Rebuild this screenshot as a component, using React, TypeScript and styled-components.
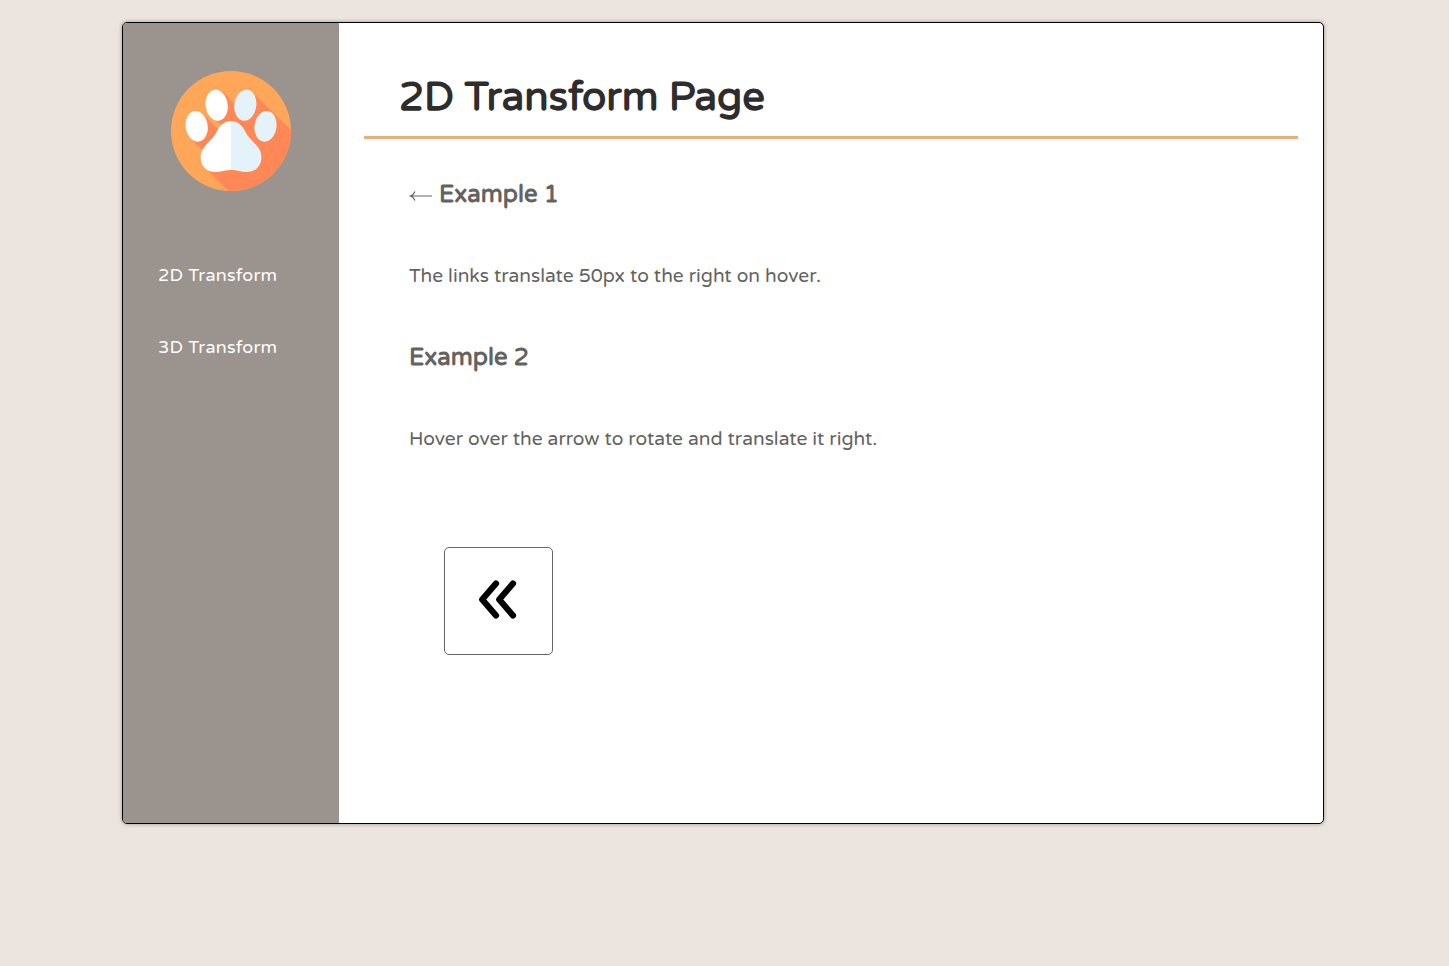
import React from "react";
import styled, { createGlobalStyle } from "styled-components";

const GlobalStyle = createGlobalStyle`
  * { box-sizing: border-box; }
  body {
    margin: 0;
    min-height: 100vh;
    background: #ece4df;
    font-family: "Varela Round", "Noto Sans", sans-serif;
    color: #636361;
  }
`;

const Frame = styled.div`
  display: flex;
  width: 1202px;
  height: 802px;
  margin: 22px 0 0 122px;
  border: 1px solid #000;
  border-radius: 5px;
  background: #fff;
  overflow: hidden;
  box-shadow: 0 0 4px rgba(0, 0, 0, 0.35);
`;

const Sidebar = styled.aside`
  flex: 0 0 216px;
  padding-top: 48px;
  background: #9b938d;
`;

const Logo = styled.svg`
  display: block;
  width: 120px;
  height: 120px;
  margin: 0 auto;
`;

const Nav = styled.nav`
  display: flex;
  flex-direction: column;
  gap: 48px;
  padding: 72px 0 0 35px;
`;

const NavLink = styled.a`
  font-size: 18px;
  line-height: 24px;
  letter-spacing: 0.22px;
  color: #fff;
  text-decoration: none;
  white-space: nowrap;
`;

const Main = styled.main`
  flex: 1;
  padding: 44px 25px 0;
`;

const Title = styled.h1`
  margin: 0;
  height: 72px;
  padding-left: 35px;
  border-bottom: 3px solid #e9b079;
  font-size: 40px;
  line-height: 60px;
  font-weight: 700;
  color: #2d2d2d;
  white-space: nowrap;
`;

const Content = styled.div`
  padding: 40px 0 0 45px;
`;

const Example = styled.section`
  height: 163px;
`;

const Heading = styled.h2`
  display: flex;
  align-items: center;
  gap: 6px;
  margin: 0 0 53px;
  font-size: 24px;
  line-height: 32px;
  font-weight: 700;
  white-space: nowrap;
`;

const BackArrow = styled.svg`
  width: 24px;
  height: 12px;
  margin-top: 2px;
`;

const Text = styled.p`
  margin: 0;
  font-size: 19.2px;
  line-height: 24px;
  white-space: nowrap;
`;

const ArrowBox = styled.div`
  display: flex;
  align-items: center;
  justify-content: center;
  width: 109px;
  height: 108px;
  margin: 42px 0 0 35px;
  padding: 0 2px 2px 0;
  border: 1px solid #666;
  border-radius: 5px;
`;

const Paw = () => (
  <Logo viewBox="0 0 120 120">
    <defs>
      <clipPath id="disc">
        <circle cx="60" cy="60" r="60" />
      </clipPath>
    </defs>
    <g clipPath="url(#disc)">
      <rect width="120" height="120" fill="#ffa759" />
      <g fill="#ff8856">
        <path d="M82 22L130 69V130H68L33 96L50 70L66 47Z" />
        <path d="M19 67L33 44L55 66L38 86Z" />
        <path d="M52 21L76 45L60 60L39 46Z" />
      </g>
      <g fill="#fff">
        <ellipse cx="25.7" cy="55.3" rx="11" ry="15.4" transform="rotate(-8 25.7 55.3)" />
        <ellipse cx="45.7" cy="34.2" rx="11" ry="15.6" transform="rotate(-8 45.7 34.2)" />
        <path d="M60 50C52 50 48 56 45 62C40 71 29.8 75 29.6 86C29.4 95 36 101 44 101C50 101 54 99 60 99Z" />
      </g>
      <g fill="#e4f2fa">
        <ellipse cx="74.3" cy="34.2" rx="11" ry="15.6" transform="rotate(8 74.3 34.2)" />
        <ellipse cx="94.5" cy="55.3" rx="11" ry="15.4" transform="rotate(8 94.5 55.3)" />
        <path d="M60 50C68 50 72 56 75 62C80 71 90.2 75 90.4 86C90.6 95 84 101 76 101C70 101 66 99 60 99Z" />
      </g>
    </g>
  </Logo>
);

export default function App() {
  return (
    <>
      <GlobalStyle />
      <Frame>
        <Sidebar>
          <Paw />
          <Nav>
            <NavLink>2D Transform</NavLink>
            <NavLink>3D Transform</NavLink>
          </Nav>
        </Sidebar>
        <Main>
          <Title>2D Transform Page</Title>
          <Content>
            <Example>
              <Heading>
                <BackArrow viewBox="0 0 24 12" fill="none" stroke="#636361" strokeWidth="1.2">
                  <path d="M23 6H1.5M6 1.5Q4.5 5 1.5 6Q4.5 7 6 10.5" />
                </BackArrow>
                Example 1
              </Heading>
              <Text>The links translate 50px to the right on hover.</Text>
            </Example>
            <Example>
              <Heading>Example 2</Heading>
              <Text>Hover over the arrow to rotate and translate it right.</Text>
            </Example>
            <ArrowBox>
              <svg width="40" height="40" viewBox="0 0 40 40" fill="none" stroke="#000" strokeWidth="6.2" strokeLinecap="round" strokeLinejoin="round">
                <path d="M18 3.5L4.2 19.5L18 35.5M35 3.5L21.2 19.5L35 35.5" />
              </svg>
            </ArrowBox>
          </Content>
        </Main>
      </Frame>
    </>
  );
}
